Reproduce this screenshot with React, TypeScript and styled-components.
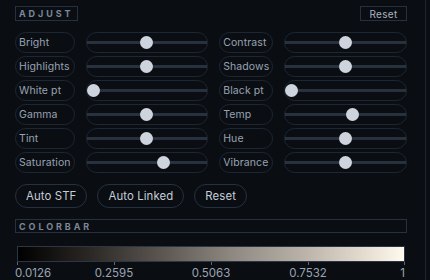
import React from "react";
import styled, { createGlobalStyle } from "styled-components";

const Global = createGlobalStyle`
  html, body { margin: 0; padding: 0; background: #0a0e13; }
  body { font-family: Inter, "Noto Sans", sans-serif; }
`;

const Panel = styled.div`
  width: 426px;
  height: 280px;
  box-sizing: border-box;
  padding: 6px 18px 0 15px;
  border-right: 1px solid #1e2631;
  background: #0a0e13;
  display: flex;
  flex-direction: column;
`;

const HeaderRow = styled.div`
  display: flex;
  justify-content: space-between;
  align-items: center;
  height: 15px;
`;

const SectionTitle = styled.div<{ $wide?: boolean }>`
  box-sizing: border-box;
  height: ${(p) => (p.$wide ? "14px" : "15px")};
  ${(p) => (p.$wide ? "width: 100%;" : "")}
  border: 1px solid #253040;
  padding: 0 4px 0 3px;
  display: flex;
  align-items: center;
  font-size: 9px;
  font-weight: 700;
  letter-spacing: 2.9px;
  color: #7c8797;
`;

const SmallButton = styled.button`
  box-sizing: border-box;
  width: 47px;
  height: 15px;
  border: 1px solid #253040;
  background: transparent;
  color: #aab3c0;
  font-family: Inter, sans-serif;
  font-size: 10px;
  padding: 0;
  letter-spacing: 0.3px;
`;

const Grid = styled.div`
  margin-top: 11px;
  display: grid;
  grid-template-columns: auto 1fr auto 1fr;
  column-gap: 11px;
  row-gap: 3px;
`;

const Label = styled.div`
  box-sizing: border-box;
  height: 21px;
  border: 1px solid #1d2633;
  border-radius: 10.5px;
  padding: 0 3px;
  display: flex;
  align-items: center;
  font-size: 10.5px;
  letter-spacing: 0.1px;
  color: #98a2b1;
  white-space: nowrap;
`;

const SliderBox = styled.div`
  position: relative;
  box-sizing: border-box;
  height: 21px;
  border: 1px solid #1d2633;
  border-radius: 10.5px;
  display: flex;
  align-items: center;
`;

const Track = styled.div`
  width: 100%;
  height: 3px;
  background: #28323f;
`;

const Thumb = styled.div`
  position: absolute;
  top: 50%;
  width: 13px;
  height: 13px;
  margin-top: -6.5px;
  border-radius: 50%;
  background: #cdd4de;
`;

const ButtonRow = styled.div`
  margin-top: 11px;
  display: flex;
  gap: 10px;
`;

const PillButton = styled.button`
  box-sizing: border-box;
  height: 24px;
  padding: 0 10px;
  border: 1px solid #253040;
  border-radius: 12px;
  background: transparent;
  color: #c6cdd7;
  font-family: Inter, sans-serif;
  font-size: 11.4px;
  letter-spacing: 0.1px;
`;

const ColorbarSection = styled.div`
  margin-top: 11px;
  display: flex;
  flex-direction: column;
`;

const BarWrap = styled.div`
  position: relative;
  margin: 13px 2px 0 2px;
  height: 30px;
`;

const GradientBar = styled.div`
  box-sizing: border-box;
  height: 16px;
  border: 1px solid #2b3645;
  background: linear-gradient(
    to right,
    #000000 0%,
    #2a2623 18%,
    #5d5852 38%,
    #8d8780 55%,
    #bdb5ab 75%,
    #e6ddd1 90%,
    #fff9ee 100%
  );
`;

const Tick = styled.div`
  position: absolute;
  top: 16px;
  width: 1px;
  height: 3px;
  background: #5b6574;
`;

const TickLabel = styled.div<{ $align: "start" | "mid" | "end" }>`
  position: absolute;
  top: 20px;
  font-size: 11.5px;
  line-height: 14px;
  color: #9aa3b1;
  transform: translateX(
    ${(p) => (p.$align === "start" ? "-2px" : p.$align === "end" ? "-100%" : "-50%")}
  );
`;

type Row = [string, number, string, number];
const rows: Row[] = [
  ["Bright", 0.5, "Contrast", 0.5],
  ["Highlights", 0.5, "Shadows", 0.5],
  ["White pt", 0, "Black pt", 0],
  ["Gamma", 0.5, "Temp", 0.56],
  ["Tint", 0.5, "Hue", 0.5],
  ["Saturation", 0.65, "Vibrance", 0.5],
];

const Slider: React.FC<{ value: number }> = ({ value }) => (
  <SliderBox>
    <Track />
    <Thumb style={{ left: `calc(${value} * (100% - 13px))` }} />
  </SliderBox>
);

const ticks = ["0.0126", "0.2595", "0.5063", "0.7532", "1"];

export default function App() {
  return (
    <>
      <Global />
      <Panel>
        <HeaderRow>
          <SectionTitle>ADJUST</SectionTitle>
          <SmallButton>Reset</SmallButton>
        </HeaderRow>
        <Grid>
          {rows.map(([a, av, b, bv]) => (
            <React.Fragment key={a}>
              <Label>{a}</Label>
              <Slider value={av} />
              <Label>{b}</Label>
              <Slider value={bv} />
            </React.Fragment>
          ))}
        </Grid>
        <ButtonRow>
          <PillButton>Auto STF</PillButton>
          <PillButton>Auto Linked</PillButton>
          <PillButton>Reset</PillButton>
        </ButtonRow>
        <ColorbarSection>
          <SectionTitle $wide>COLORBAR</SectionTitle>
          <BarWrap>
            <GradientBar />
            {ticks.map((t, i) => {
              const pct = (i / (ticks.length - 1)) * 100;
              const align = i === 0 ? "start" : i === ticks.length - 1 ? "end" : "mid";
              return (
                <React.Fragment key={t}>
                  <Tick style={{ left: `calc(${pct}% - ${i === ticks.length - 1 ? 1 : 0}px)` }} />
                  <TickLabel $align={align} style={{ left: `${pct}%` }}>
                    {t}
                  </TickLabel>
                </React.Fragment>
              );
            })}
          </BarWrap>
        </ColorbarSection>
      </Panel>
    </>
  );
}
